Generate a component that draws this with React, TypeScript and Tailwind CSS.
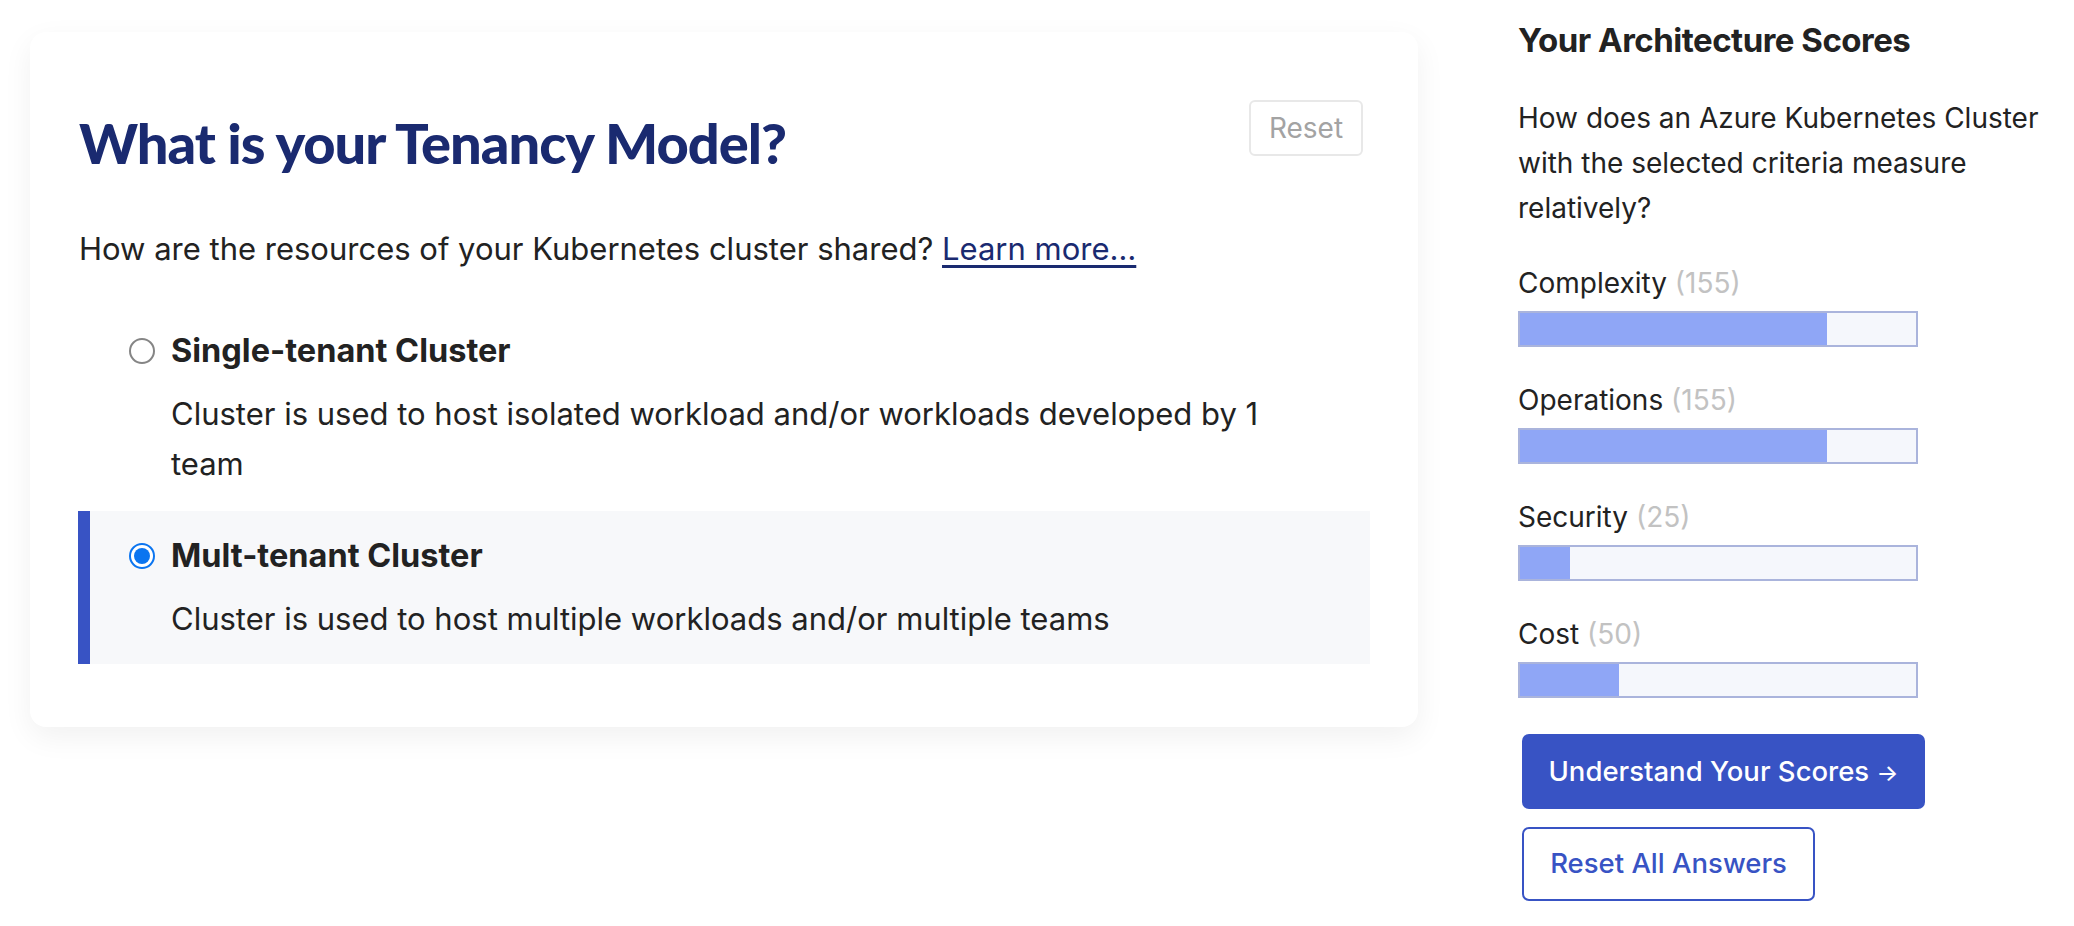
import React from 'react';

type Option = {
  id: string;
  title: string;
  description: string;
};

const options: Option[] = [
  {
    id: 'single',
    title: 'Single-tenant Cluster',
    description: 'Cluster is used to host isolated workload and/or workloads developed by 1 team',
  },
  {
    id: 'multi',
    title: 'Mult-tenant Cluster',
    description: 'Cluster is used to host multiple workloads and/or multiple teams',
  },
];

const scores = [
  { label: 'Complexity', value: 155 },
  { label: 'Operations', value: 155 },
  { label: 'Security', value: 25 },
  { label: 'Cost', value: 50 },
];

const MAX_SCORE = 200;

function Radio({ checked }: { checked: boolean }) {
  if (checked) {
    return (
      <span className="flex h-[26px] w-[26px] shrink-0 items-center justify-center rounded-full border-[2px] border-[#0b75f0] bg-white">
        <span className="h-[16px] w-[16px] rounded-full bg-[#0b75f0]" />
      </span>
    );
  }
  return <span className="h-[26px] w-[26px] shrink-0 rounded-full border-[2px] border-[#858585] bg-white" />;
}

function TenancyCard() {
  const selected = 'multi';

  return (
    <div className="w-[1388px] shrink-0 rounded-[16px] bg-white px-[48px] pb-[63px] pt-[68px] shadow-[0_10px_30px_rgba(0,0,0,0.06)]">
      <div className="flex items-start justify-between">
        <h2 className="mt-[9px] pl-px font-['Lato',sans-serif] text-[56px] font-black leading-[1.2] tracking-[-1px] text-[#1a2a70]">
          What is your Tenancy Model?
        </h2>
        <button className="mr-[7px] h-[56px] w-[114px] rounded-[6px] border-[2px] border-[#e8e8e8] bg-white text-[28px] text-[#a3a3a3]">
          Reset
        </button>
      </div>

      <p className="mt-[51px] pl-px text-[31px] leading-[43px] text-[#222]">
        How are the resources of your Kubernetes cluster shared?{' '}
        <a href="#" className="text-[#1a2a70] underline underline-offset-[5px]">
          Learn more…
        </a>
      </p>

      <div className="mt-[36px] flex flex-col gap-[2px]">
        {options.map((opt) => {
          const isSelected = opt.id === selected;
          return (
            <label
              key={opt.id}
              className={`flex flex-col border-l-[12px] pb-[20px] pl-[39px] pt-[25px] ${
                isSelected ? 'border-[#3853c4] bg-[#f7f8fa]' : 'border-transparent'
              }`}
            >
              <div className="flex h-[40px] items-center gap-[16px]">
                <Radio checked={isSelected} />
                <span className="text-[32.5px] font-bold text-[#222]">{opt.title}</span>
              </div>
              <p className="mt-[18px] max-w-[1140px] pl-[42px] text-[31px] leading-[50px] text-[#222]">
                {opt.description}
              </p>
            </label>
          );
        })}
      </div>
    </div>
  );
}

function ScoresPanel() {
  return (
    <aside className="w-[545px] shrink-0">
      <h3 className="text-[33px] font-bold leading-[40px] tracking-[-0.5px] text-[#222]">
        Your Architecture Scores
      </h3>
      <p className="mt-[36px] text-[28px] leading-[45px] text-[#222]">
        How does an Azure Kubernetes Cluster with the selected criteria measure relatively?
      </p>

      <div className="mt-[34px] flex flex-col gap-[35px]">
        {scores.map((s) => (
          <div key={s.label}>
            <div className="text-[28px] leading-[36px] text-[#222]">
              {s.label} <span className="text-[#c2c2c2]">({s.value})</span>
            </div>
            <div className="mt-[10px] h-[36px] w-[400px] border-[2px] border-[#aab4dc] bg-[#f5f7fc]">
              <div className="h-full bg-[#8fa6f6]" style={{ width: `${(s.value / MAX_SCORE) * 100}%` }} />
            </div>
          </div>
        ))}
      </div>

      <div className="ml-[4px] mt-[36px] flex flex-col items-start gap-[18px]">
        <button className="h-[75px] w-[403px] rounded-[7px] bg-[#3853c4] text-[27.5px] font-medium text-white">
          Understand Your Scores <span className="text-[23px]">→</span>
        </button>
        <button className="h-[74px] w-[293px] rounded-[7px] border-[2px] border-[#3853c4] bg-white text-[27.5px] font-medium text-[#3853c4]">
          Reset All Answers
        </button>
      </div>
    </aside>
  );
}

export default function App() {
  return (
    <div className="min-h-screen bg-white font-['Inter',sans-serif]">
      <div className="flex items-start gap-[100px] pl-[30px] pt-[32px]">
        <TenancyCard />
        <div className="-mt-[12px]">
          <ScoresPanel />
        </div>
      </div>
    </div>
  );
}
